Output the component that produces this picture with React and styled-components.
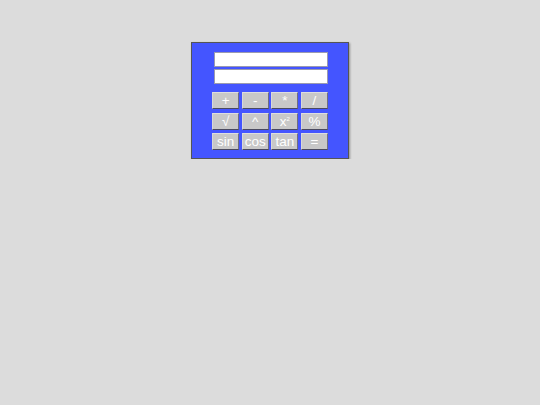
import React from 'react';
import styled, { createGlobalStyle } from 'styled-components';

const GlobalStyle = createGlobalStyle`
  html, body {
    margin: 0;
    padding: 0;
    background: #dcdcdc;
    font-family: 'Liberation Sans', Arial, sans-serif;
  }
`;

const Page = styled.div`
  display: flex;
  justify-content: center;
  padding-top: 42px;
`;

const Calculator = styled.div`
  width: 158px;
  box-sizing: border-box;
  background: #4455ff;
  border: 1px solid #555;
  box-shadow: 1px 1px 2px rgba(0, 0, 0, 0.35);
  padding: 9px 0 8px;
  display: flex;
  flex-direction: column;
  align-items: center;
`;

const Display = styled.input`
  width: 114px;
  height: 15px;
  box-sizing: border-box;
  margin: 0 0 2px 2px;
  padding: 0 2px;
  border: 1px solid #9a9ab0;
  background: #fff;
  font-family: 'Liberation Sans', Arial, sans-serif;
  font-size: 11px;
  outline: none;
`;

const Keys = styled.div`
  margin-top: 6px;
  display: grid;
  grid-template-columns: repeat(4, 27px);
  column-gap: 2.6px;
  row-gap: 3.5px;
`;

const Key = styled.button`
  height: 17px;
  padding: 0;
  box-sizing: border-box;
  background: #c8c8c8;
  border: 1px solid;
  border-color: #dedede #6f6f80 #4a4a60 #d8d8d8;
  color: #fff;
  font-family: 'Liberation Sans', Arial, sans-serif;
  font-size: 13.5px;
  line-height: 15px;
  cursor: pointer;
`;

const Sup = styled.span`
  font-size: 6px;
  line-height: 0;
  position: relative;
  top: -5px;
`;

const keys = ['+', '-', '*', '/', '√', '^', 'x2', '%', 'sin', 'cos', 'tan', '='];

export default function App() {
  return (
    <>
      <GlobalStyle />
      <Page>
        <Calculator>
          <Display type="text" />
          <Display type="text" />
          <Keys>
            {keys.map((k) => (
              <Key key={k}>
                {k === 'x2' ? (
                  <>
                    x<Sup>2</Sup>
                  </>
                ) : (
                  k
                )}
              </Key>
            ))}
          </Keys>
        </Calculator>
      </Page>
    </>
  );
}
